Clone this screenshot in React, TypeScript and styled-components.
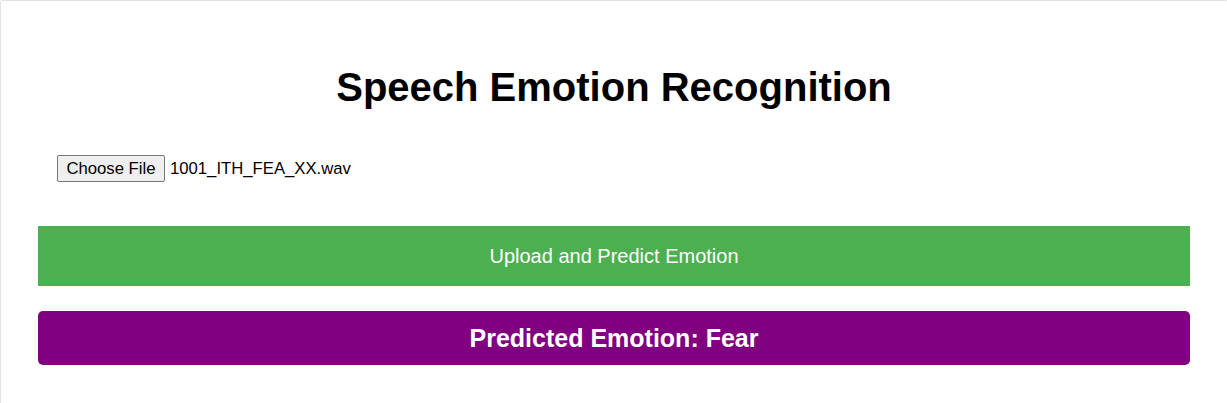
import React from "react";
import styled, { createGlobalStyle } from "styled-components";

const Global = createGlobalStyle`
  html, body { margin: 0; padding: 0; background: #fff; }
  body { font-family: "Liberation Sans", Arial, sans-serif; overflow: hidden; }
`;

const Container = styled.div`
  box-sizing: border-box;
  width: 1228px;
  min-height: 420px;
  border: 1px solid #e3e3e3;
  border-radius: 2px;
  padding: 0 37px;
  display: flex;
  flex-direction: column;
`;

const Title = styled.h1`
  margin: 63px 0 0;
  font-size: 40px;
  line-height: 46px;
  font-weight: 700;
  text-align: center;
  color: #000;
`;

const FileRow = styled.div`
  margin-top: 45px;
  padding-left: 19px;
  display: flex;
  align-items: center;
  gap: 5px;
  font-size: 16.7px;
`;

const ChooseButton = styled.button`
  box-sizing: border-box;
  height: 27px;
  width: 108px;
  padding: 0;
  font-family: "Liberation Sans", Arial, sans-serif;
  font-size: 16.7px;
  color: #000;
  background: #efefef;
  border: 1px solid #767676;
  border-radius: 2px;
`;

const FileName = styled.span`
  color: #000;
  font-size: 16.7px;
`;

const UploadButton = styled.button`
  margin-top: 44px;
  height: 60px;
  width: 100%;
  border: none;
  background: #4caf50;
  color: #fff;
  font-family: "Liberation Sans", Arial, sans-serif;
  font-size: 20px;
`;

const Result = styled.div`
  margin-top: 25px;
  height: 54px;
  border-radius: 5px;
  background: #800080;
  color: #fff;
  display: flex;
  align-items: center;
  justify-content: center;
  font-size: 25px;
  font-weight: 700;
`;

export default function App() {
  return (
    <>
      <Global />
      <Container>
        <Title>Speech Emotion Recognition</Title>
        <FileRow>
          <ChooseButton>Choose File</ChooseButton>
          <FileName>1001_ITH_FEA_XX.wav</FileName>
        </FileRow>
        <UploadButton>Upload and Predict Emotion</UploadButton>
        <Result>Predicted Emotion: Fear</Result>
      </Container>
    </>
  );
}
